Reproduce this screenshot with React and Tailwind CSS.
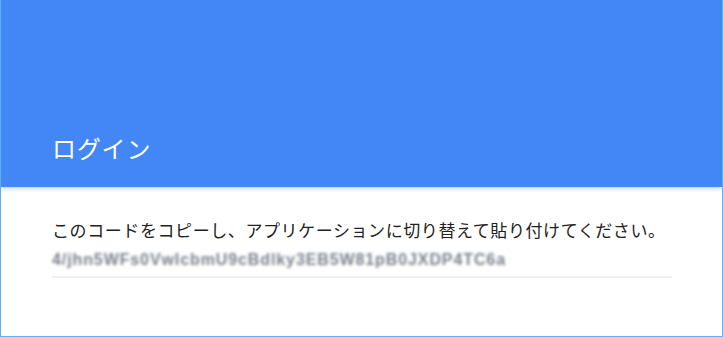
import React from 'react';

export default function App() {
  return (
    <div
      className="w-[723px] h-[337px] bg-white border-x border-b border-[#5bb3f8] overflow-hidden"
      style={{ fontFamily: '"Noto Sans CJK JP", "Noto Sans", sans-serif' }}
    >
      {/* Header */}
      <div className="h-[187px] bg-[#4287f5] flex items-end px-[51px] pb-[27px] shadow-[0_2px_4px_rgba(0,0,0,0.18)] relative">
        <h1 className="text-[24px] font-normal text-white leading-none tracking-[0.8px]">ログイン</h1>
      </div>

      {/* Body */}
      <div className="px-[51px] pt-[33px]">
        <p className="text-[17px] leading-[20px] text-[#222] tracking-[0.58px]">
          このコードをコピーし、アプリケーションに切り替えて貼り付けてください。
        </p>
        <div className="w-[620px] mt-[11px] border-b-2 border-[#f0f0f0] pb-[7px]">
          <span className="block text-[16px] leading-[18px] text-[#7a7f8a] blur-[1.4px] font-semibold tracking-[0.9px]" style={{ fontFamily: '"Liberation Sans", sans-serif' }}>
            4/jhn5WFs0VwIcbmU9cBdlky3EB5W81pB0JXDP4TC6a
          </span>
        </div>
      </div>
    </div>
  );
}
